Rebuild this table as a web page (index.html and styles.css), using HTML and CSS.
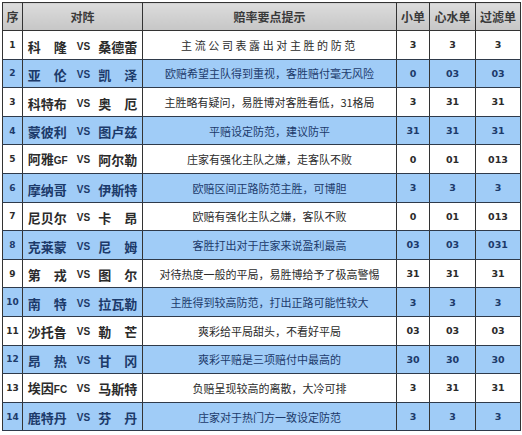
FILE: index.html
```html
<!DOCTYPE html>
<html lang="zh-CN">
<head>
<meta charset="utf-8">
<title>赔率要点提示</title>
<link rel="stylesheet" href="styles.css">
</head>
<body>
<table class="odds">
  <colgroup>
    <col class="c-no"><col class="c-match"><col class="c-tip"><col class="c-n1"><col class="c-n2"><col class="c-n3">
  </colgroup>
  <thead>
    <tr><th>序</th><th>对阵</th><th>赔率要点提示</th><th>小单</th><th>心水单</th><th>过滤单</th></tr>
  </thead>
  <tbody>
    <tr><td class="no">1</td><td class="match"><span class="team">科隆</span><span class="vs">VS</span><span class="team">桑德蕾</span></td><td class="tip wide">主流公司表露出对主胜的防范</td><td class="num">3</td><td class="num">3</td><td class="num">3</td></tr>
    <tr class="blue"><td class="no">2</td><td class="match"><span class="team">亚伦</span><span class="vs">VS</span><span class="team">凯泽</span></td><td class="tip">欧赔希望主队得到重视，客胜赔付毫无风险</td><td class="num">0</td><td class="num">03</td><td class="num">03</td></tr>
    <tr><td class="no">3</td><td class="match"><span class="team">科特布</span><span class="vs">VS</span><span class="team">奥厄</span></td><td class="tip">主胜略有疑问，易胜博对客胜看低，31格局</td><td class="num">3</td><td class="num">31</td><td class="num">31</td></tr>
    <tr class="blue"><td class="no">4</td><td class="match"><span class="team">蒙彼利</span><span class="vs">VS</span><span class="team">图卢兹</span></td><td class="tip">平赔设定防范，建议防平</td><td class="num">31</td><td class="num">31</td><td class="num">31</td></tr>
    <tr><td class="no">5</td><td class="match"><span class="team">阿雅<span class="lat">GF</span></span><span class="vs">VS</span><span class="team">阿尔勒</span></td><td class="tip">庄家有强化主队之嫌，走客队不败</td><td class="num">0</td><td class="num">01</td><td class="num">013</td></tr>
    <tr class="blue"><td class="no">6</td><td class="match"><span class="team">摩纳哥</span><span class="vs">VS</span><span class="team">伊斯特</span></td><td class="tip">欧赔区间正路防范主胜，可博胆</td><td class="num">3</td><td class="num">3</td><td class="num">3</td></tr>
    <tr><td class="no">7</td><td class="match"><span class="team">尼贝尔</span><span class="vs">VS</span><span class="team">卡昂</span></td><td class="tip">欧赔有强化主队之嫌，客队不败</td><td class="num">0</td><td class="num">01</td><td class="num">013</td></tr>
    <tr class="blue"><td class="no">8</td><td class="match"><span class="team">克莱蒙</span><span class="vs">VS</span><span class="team">尼姆</span></td><td class="tip">客胜打出对于庄家来说盈利最高</td><td class="num">03</td><td class="num">03</td><td class="num">031</td></tr>
    <tr><td class="no">9</td><td class="match"><span class="team">第戎</span><span class="vs">VS</span><span class="team">图尔</span></td><td class="tip">对待热度一般的平局，易胜博给予了极高警惕</td><td class="num">31</td><td class="num">31</td><td class="num">31</td></tr>
    <tr class="blue"><td class="no">10</td><td class="match"><span class="team">南特</span><span class="vs">VS</span><span class="team">拉瓦勒</span></td><td class="tip">主胜得到较高防范，打出正路可能性较大</td><td class="num">3</td><td class="num">3</td><td class="num">3</td></tr>
    <tr><td class="no">11</td><td class="match"><span class="team">沙托鲁</span><span class="vs">VS</span><span class="team">勒芒</span></td><td class="tip">爽彩给平局甜头，不看好平局</td><td class="num">03</td><td class="num">03</td><td class="num">03</td></tr>
    <tr class="blue"><td class="no">12</td><td class="match"><span class="team">昂热</span><span class="vs">VS</span><span class="team">甘冈</span></td><td class="tip">爽彩平赔是三项赔付中最高的</td><td class="num">30</td><td class="num">30</td><td class="num">30</td></tr>
    <tr><td class="no">13</td><td class="match"><span class="team">埃因<span class="lat">FC</span></span><span class="vs">VS</span><span class="team">马斯特</span></td><td class="tip">负赔呈现较高的离散，大冷可排</td><td class="num">3</td><td class="num">31</td><td class="num">31</td></tr>
    <tr class="blue"><td class="no">14</td><td class="match"><span class="team">鹿特丹</span><span class="vs">VS</span><span class="team">芬丹</span></td><td class="tip">庄家对于热门方一致设定防范</td><td class="num">3</td><td class="num">3</td><td class="num">3</td></tr>
  </tbody>
</table>
</body>
</html>
```

FILE: styles.css
```css
html, body {
  margin: 0;
  padding: 0;
  background: #ffffff;
}
body {
  padding: 2px;
  font-family: "Noto Sans CJK SC", "Noto Sans", sans-serif;
}
.odds {
  border-collapse: collapse;
  table-layout: fixed;
  width: 518px;
  border: 1px solid #333333;
}
.c-no { width: 20px; }
.c-match { width: 120px; }
.c-tip { width: 254px; }
.c-n1 { width: 33px; }
.c-n2 { width: 46px; }
.c-n3 { width: 45px; }

.odds th,
.odds td {
  padding: 0;
  text-align: center;
  vertical-align: middle;
  border-left: 1px solid #333333;
  border-right: 1px solid #333333;
  border-bottom: 1px solid #2f3a4a;
  white-space: nowrap;
  overflow: hidden;
}
.odds th {
  height: 27px;
  background: linear-gradient(#dcdcdc, #c6c6c6);
  color: #3a3a3a;
  font-size: 12px;
  font-weight: bold;
  border-bottom: 1px solid #333333;
}
.odds td {
  height: 27.6px;
  color: #2b2b2b;
  background: #ffffff;
}
.odds tr.blue td {
  background: #a0ccf7;
  color: #1c3a6a;
}
.no {
  font-family: "DejaVu Sans", sans-serif;
  font-weight: bold;
  font-size: 9px;
}
.match {
  font-size: 13px;
  font-weight: bold;
}
.team {
  display: inline-block;
  width: 39px;
  text-align: justify;
  text-align-last: justify;
  vertical-align: middle;
  line-height: 16px;
}
.lat {
  font-family: "Liberation Sans", sans-serif;
  font-size: 10px;
}
.vs {
  display: inline-block;
  font-family: "Liberation Sans", sans-serif;
  font-size: 10px;
  font-weight: bold;
  margin: 0 8px 0 10px;
  vertical-align: middle;
  line-height: 16px;
}
.tip {
  font-size: 11px;
}
.tip.wide {
  letter-spacing: 2.6px;
}
.num {
  font-family: "DejaVu Sans", sans-serif;
  font-weight: bold;
  font-size: 9.5px;
}
```
